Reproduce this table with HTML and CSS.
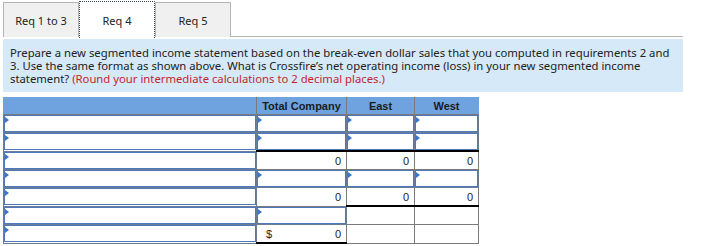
FILE: index.html
```html
<!DOCTYPE html>
<html lang="en">
<head>
    <meta charset="UTF-8">
    <meta name="viewport" content="width=device-width, initial-scale=1.0">
    <title>Req 4</title>
    <link rel="stylesheet" href="styles.css">
</head>
<body>
    <div class="page">
        <div class="tabs">
            <button class="tab">Req 1 to 3</button>
            <button class="tab active">Req 4</button>
            <button class="tab">Req 5</button>
        </div>

        <div class="prompt">
            Prepare a new segmented income statement based on the break-even dollar sales that you computed in requirements 2 and 3. Use the same format as shown above. What is Crossfire’s net operating income (loss) in your new segmented income statement? <span class="hint">(Round your intermediate calculations to 2 decimal places.)</span>
        </div>

        <table class="stmt">
            <colgroup>
                <col class="c-label">
                <col class="c-total">
                <col class="c-east">
                <col class="c-west">
            </colgroup>
            <thead>
                <tr>
                    <th></th>
                    <th>Total Company</th>
                    <th>East</th>
                    <th>West</th>
                </tr>
            </thead>
            <tbody>
                <tr>
                    <td class="entry"><div class="field"></div></td>
                    <td class="entry"><div class="field"></div></td>
                    <td class="entry"><div class="field"></div></td>
                    <td class="entry"><div class="field"></div></td>
                </tr>
                <tr>
                    <td class="entry"><div class="field"></div></td>
                    <td class="entry"><div class="field"></div></td>
                    <td class="entry"><div class="field"></div></td>
                    <td class="entry"><div class="field"></div></td>
                </tr>
                <tr class="subtotal">
                    <td class="entry"><div class="field"></div></td>
                    <td class="num">0</td>
                    <td class="num">0</td>
                    <td class="num">0</td>
                </tr>
                <tr>
                    <td class="entry"><div class="field"></div></td>
                    <td class="entry"><div class="field"></div></td>
                    <td class="entry"><div class="field"></div></td>
                    <td class="entry"><div class="field"></div></td>
                </tr>
                <tr>
                    <td class="entry"><div class="field"></div></td>
                    <td class="num">0</td>
                    <td class="num ruled">0</td>
                    <td class="num ruled">0</td>
                </tr>
                <tr>
                    <td class="entry"><div class="field"></div></td>
                    <td class="entry"><div class="field"></div></td>
                    <td></td>
                    <td></td>
                </tr>
                <tr>
                    <td class="entry"><div class="field"></div></td>
                    <td class="num ruled"><span class="cur">$</span>0</td>
                    <td></td>
                    <td></td>
                </tr>
            </tbody>
        </table>
    </div>
</body>
</html>
```

FILE: styles.css
```css
body {
    margin: 0;
    background-color: #fff;
    font-family: "Noto Sans", "DejaVu Sans", sans-serif;
    color: #222;
}
.page {
    padding: 1px 0 0 3px;
    width: 680px;
}

/* tab strip */
.tabs {
    display: flex;
    height: 35px;
    border-bottom: 1px solid #b4b4b4;
    margin-bottom: 2px;
}
.tab {
    width: 76px;
    height: 35px;
    margin-top: 1px;
    border: 1px solid #b4b4b4;
    border-bottom: none;
    background-color: #f0f0f0;
    font-family: inherit;
    font-size: 11px;
    color: #222;
    padding: 0;
}
.tab.active {
    height: 37px;
    margin-top: 0;
    background-color: #fff;
    border: 1px dotted #3a4a6e;
    border-bottom: none;
    position: relative;
    z-index: 1;
}

/* instructions */
.prompt {
    background-color: #d6e9f8;
    padding: 7px;
    font-size: 11.3px;
    line-height: 13px;
    height: 39px;
    color: #222;
    margin-bottom: 5px;
}
.hint {
    display: inline-block;
    color: #c1272d;
}

/* statement grid */
.stmt {
    border-collapse: collapse;
    width: 475px;
    font-family: "Liberation Sans", Arial, sans-serif;
    font-size: 11px;
    table-layout: fixed;
}
.c-label { width: 253px; }
.c-total { width: 90px; }
.c-east { width: 68px; }
.c-west { width: 64px; }

.stmt th {
    background-color: #6ea3df;
    height: 17px;
    padding: 0;
    font-weight: bold;
    color: #1b1b1b;
    border: 1px solid #7a7a7a;
    border-top: none;
    border-left: none;
}
.stmt th:first-child {
    border-left: 1px solid #6ea3df;
}
.stmt th:last-child {
    border-right: 1px solid #6ea3df;
}
.stmt td {
    height: 17px;
    padding: 0;
    border: 1px solid #7a7a7a;
}
.stmt td.entry {
    border-color: #6b7c99;
}
.field {
    position: relative;
    height: 15px;
    border: 1px solid #4f78b8;
    background-color: #fff;
}
/* dropdown marker in the corner of each entry box */
.field::before {
    content: "";
    position: absolute;
    left: 0;
    top: 1px;
    border-top: 3px solid transparent;
    border-bottom: 3px solid transparent;
    border-left: 4px solid #3b76c8;
}
.num {
    text-align: right;
    padding-right: 5px !important;
    color: #222;
}
.subtotal .num {
    border-top: 2px solid #000;
}
.ruled {
    border-bottom: 2px solid #000 !important;
}
.cur {
    float: left;
    padding-left: 9px;
}
```
